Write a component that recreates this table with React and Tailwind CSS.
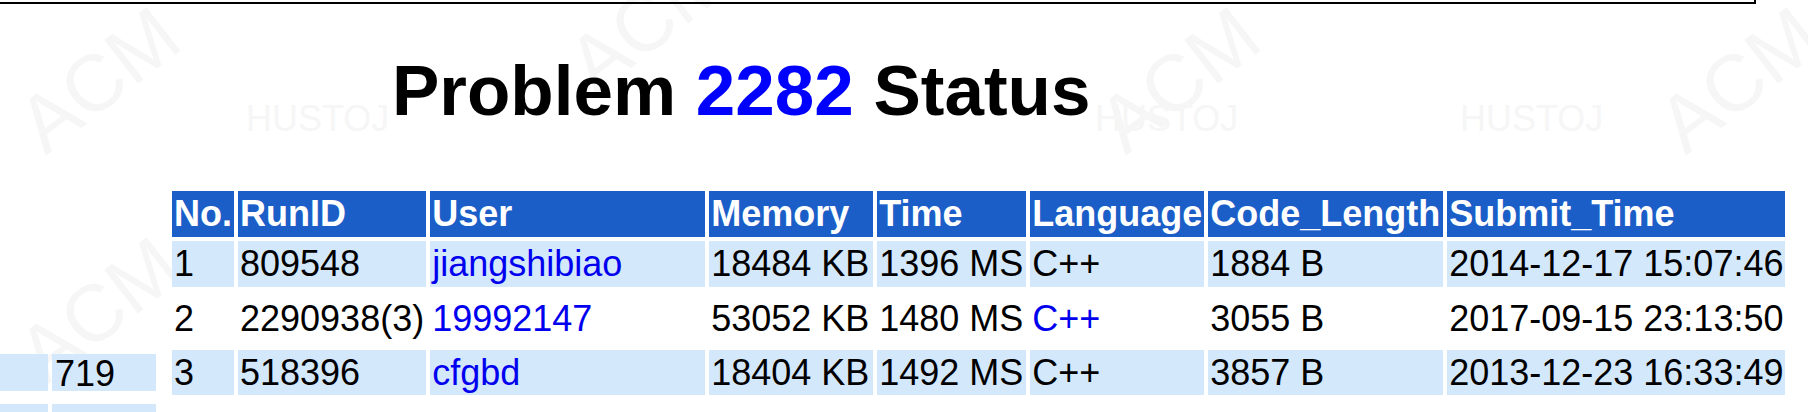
import React from "react";

const rows = [
  { no: 1, run: "809548", user: "jiangshibiao", mem: "18484 KB", time: "1396 MS", lang: "C++", langLink: false, len: "1884 B", at: "2014-12-17 15:07:46", h: "h-[46px]", bg: "bg-[#d4e8fc]" },
  { no: 2, run: "2290938(3)", user: "19992147", mem: "53052 KB", time: "1480 MS", lang: "C++", langLink: true, len: "3055 B", at: "2017-09-15 23:13:50", h: "h-[55px]", bg: "" },
  { no: 3, run: "518396", user: "cfgbd", mem: "18404 KB", time: "1492 MS", lang: "C++", langLink: false, len: "3857 B", at: "2013-12-23 16:33:49", h: "h-[45px]", bg: "bg-[#d4e8fc]" },
];

const heads = [
  { label: "No.", w: "w-[62px]" },
  { label: "RunID", w: "w-[188px]" },
  { label: "User", w: "w-[275px]" },
  { label: "Memory", w: "w-[164px]" },
  { label: "Time", w: "w-[149px]" },
  { label: "Language", w: "w-[174px]" },
  { label: "Code_Length", w: "w-[235px]" },
  { label: "Submit_Time", w: "w-[336px]" },
];

// faint background watermark
const marks = [
  { t: "ACM", cls: "left-[10px] top-[20px] text-[80px] -rotate-[38deg]" },
  { t: "ACM", cls: "left-[560px] top-[-40px] text-[80px] -rotate-[38deg]" },
  { t: "ACM", cls: "left-[1090px] top-[20px] text-[80px] -rotate-[38deg]" },
  { t: "ACM", cls: "left-[1650px] top-[20px] text-[80px] -rotate-[38deg]" },
  { t: "ACM", cls: "left-[10px] top-[250px] text-[80px] -rotate-[38deg]" },
  { t: "HUSTOJ", cls: "left-[246px] top-[92px] text-[36px]" },
  { t: "HUSTOJ", cls: "left-[1095px] top-[92px] text-[36px]" },
  { t: "HUSTOJ", cls: "left-[1460px] top-[92px] text-[36px]" },
];

export default function App() {
  return (
    <div className="relative w-[1808px] h-[412px] overflow-hidden bg-white font-['Liberation_Sans',Arial,sans-serif]">
      <div className="absolute inset-0 pointer-events-none select-none">
        {marks.map((m, i) => (
          <span key={i} className={`absolute text-[#f6f6f6] ${m.cls}`}>
            {m.t}
          </span>
        ))}
      </div>

      <div className="relative">
        {/* bottom edge of the box above */}
        <div className="w-[1756px] h-[4px] border-b-2 border-r-2 border-black" />

        <h1 className="mt-[46px] pl-[392px] text-[71px] font-bold leading-[normal] text-black">
          Problem <span className="text-[#0000ff]">2282</span> Status
        </h1>

        <div className="flex items-start mt-[56px]">
          {/* cut off ranking table on the left */}
          <div className="w-[156px] pt-[167px] flex flex-col gap-[13px]">
            <div className="flex gap-[4px] h-[37px]">
              <div className="w-[48px] bg-[#d4e8fc]" />
              <div className="w-[104px] bg-[#d4e8fc] pl-[3px] text-[36px] leading-[40px] text-black">719</div>
            </div>
            <div className="flex gap-[4px] h-[37px]">
              <div className="w-[48px] bg-[#d4e8fc]" />
              <div className="w-[104px] bg-[#d4e8fc]" />
            </div>
          </div>

          <table className="ml-[12px] table-fixed border-separate border-spacing-[4px] text-[36px] leading-[normal]">
            <thead>
              <tr className="h-[46px] bg-[#1b5ec8] text-white">
                {heads.map((h) => (
                  <th key={h.label} className={`${h.w} px-[2px] py-0 text-left font-bold whitespace-nowrap`}>
                    {h.label}
                  </th>
                ))}
              </tr>
            </thead>
            <tbody>
              {rows.map((r) => (
                <tr key={r.no} className={`${r.h} ${r.bg} text-black`}>
                  <td className="px-[2px] py-0">{r.no}</td>
                  <td className="px-[2px] py-0 whitespace-nowrap">{r.run}</td>
                  <td className="px-[2px] py-0">
                    <a href="#" className="text-[#0000ee]">{r.user}</a>
                  </td>
                  <td className="px-[2px] py-0 whitespace-nowrap">{r.mem}</td>
                  <td className="px-[2px] py-0 whitespace-nowrap">{r.time}</td>
                  <td className="px-[2px] py-0">
                    {r.langLink ? <a href="#" className="text-[#0000ee]">{r.lang}</a> : r.lang}
                  </td>
                  <td className="px-[2px] py-0 whitespace-nowrap">{r.len}</td>
                  <td className="px-[2px] py-0 whitespace-nowrap">{r.at}</td>
                </tr>
              ))}
            </tbody>
          </table>
        </div>
      </div>
    </div>
  );
}
